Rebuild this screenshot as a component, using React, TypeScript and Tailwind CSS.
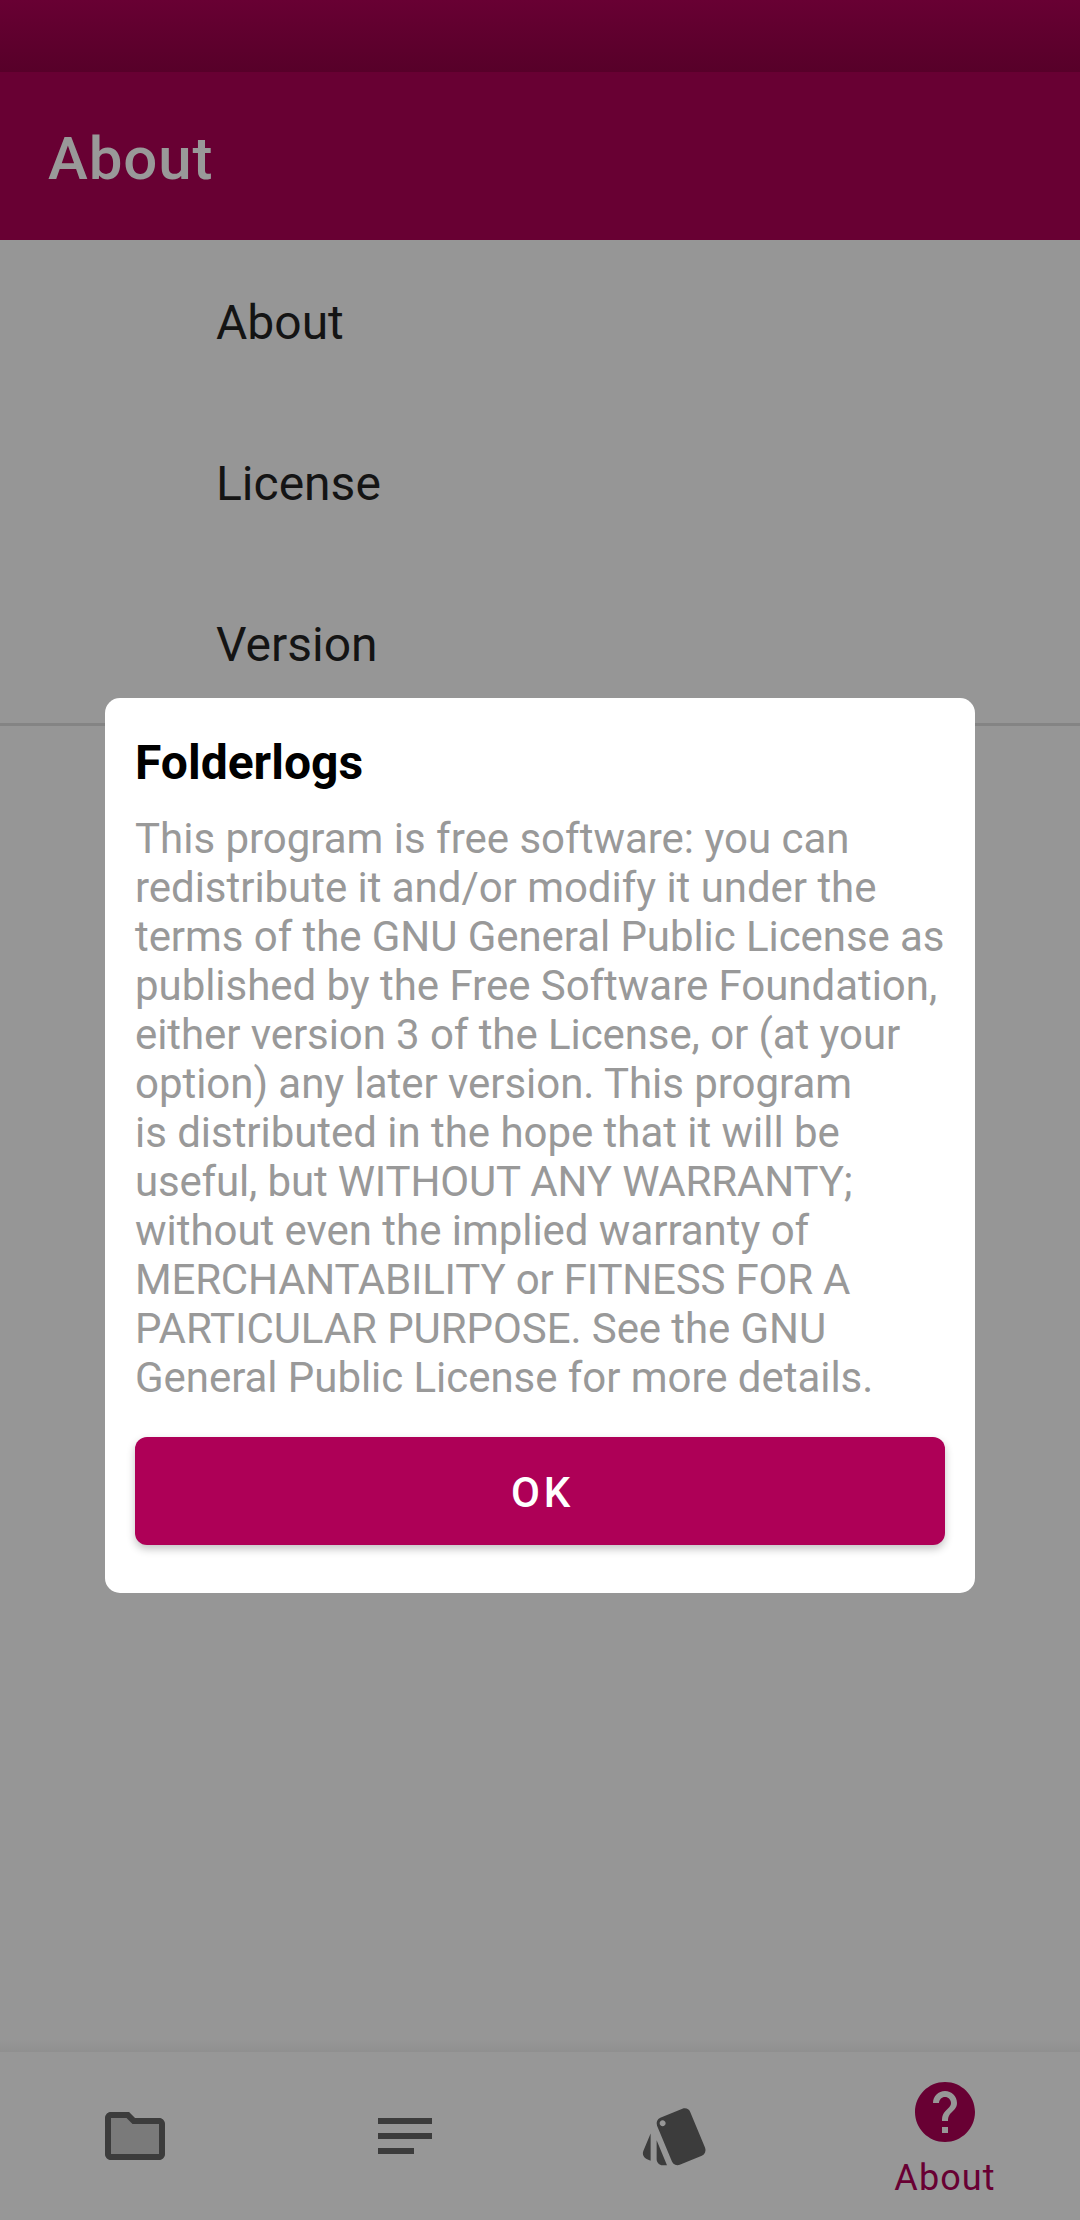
import React from "react";
import { MdFolder, MdHelp, MdNotes, MdOutlineFolder, MdStyle } from "react-icons/md";

const settings = ["About", "License", "Version"];

const licenseLines = [
  { text: "This program is free software: you can", tracking: "tracking-[-0.01px]" },
  { text: "redistribute it and/or modify it under the", tracking: "tracking-[-0.04px]" },
  { text: "terms of the GNU General Public License as", tracking: "tracking-[-0.07px]" },
  { text: "published by the Free Software Foundation,", tracking: "tracking-[-0.04px]" },
  { text: "either version 3 of the License, or (at your", tracking: "tracking-[-0.08px]" },
  { text: "option) any later version. This program", tracking: "tracking-[-0.04px]" },
  { text: "is distributed in the hope that it will be", tracking: "tracking-[-0.04px]" },
  { text: "useful, but WITHOUT ANY WARRANTY;", tracking: "tracking-[-0.16px]" },
  { text: "without even the implied warranty of", tracking: "tracking-[-0.04px]" },
  { text: "MERCHANTABILITY or FITNESS FOR A", tracking: "tracking-[-0.19px]" },
  { text: "PARTICULAR PURPOSE. See the GNU", tracking: "tracking-[-0.08px]" },
  { text: "General Public License for more details.", tracking: "tracking-[-0.05px]" },
];

function TopBar() {
  return (
    <header className="shrink-0">
      <div className="h-[72px] bg-linear-to-b from-[#680033] to-[#570029]" />
      <div className="flex h-[168px] items-center bg-[#680033] pl-12">
        <h1 className="pt-[5px] text-[60px] leading-[70px] font-medium tracking-[0.9px] text-[#999999]">About</h1>
      </div>
    </header>
  );
}

function SettingsList() {
  return (
    <ul className="shrink-0 border-b-[3px] border-[#848484]">
      {settings.map((label) => (
        <li key={label} className="flex h-[161px] items-center pt-1 pl-[216px] text-[48px] leading-14 text-[#141414]">
          {label}
        </li>
      ))}
    </ul>
  );
}

/** Two-tone folder: a translucent fill under the outline. */
function FolderIcon() {
  return (
    <span className="grid size-[72px]">
      <MdFolder className="col-start-1 row-start-1 size-[72px] text-[#7a7a7a]" />
      <MdOutlineFolder className="col-start-1 row-start-1 size-[72px]" />
    </span>
  );
}

function BottomNav() {
  return (
    <nav className="grid h-[168px] shrink-0 grid-cols-4 bg-[#979797] text-[#3c3c3c]">
      <div className="flex items-center justify-center">
        <FolderIcon />
      </div>
      <div className="flex items-center justify-center">
        <MdNotes className="size-[72px]" />
      </div>
      <div className="flex items-center justify-center">
        <MdStyle className="size-[72px]" />
      </div>
      <div className="flex flex-col items-center pt-6 text-[#680033]">
        <MdHelp className="size-[72px]" />
        <span className="mt-[9px] text-[36px] leading-[42px] tracking-[1.1px]">About</span>
      </div>
    </nav>
  );
}

function LicenseDialog() {
  return (
    <div className="absolute inset-x-[105px] top-[698px] flex h-[895px] flex-col rounded-[15px] bg-white px-[30px]">
      <h2 className="mt-[37px] text-[48px] leading-14 font-bold text-black">Folderlogs</h2>
      <p className="mt-[23px] text-[42px] leading-[49px] whitespace-nowrap text-[#999999]">
        {licenseLines.map(({ text, tracking }) => (
          <span key={text} className={`block ${tracking}`}>
            {text}
          </span>
        ))}
      </p>
      <button className="mt-[35px] h-[108px] shrink-0 rounded-xl bg-[#ae0057] pt-0.5 pl-[5px] text-[42px] font-medium tracking-[3.75px] text-white shadow-[0_4px_8px_rgba(0,0,0,0.24)]">
        OK
      </button>
    </div>
  );
}

export default function App() {
  return (
    <div className="relative flex h-[2220px] w-[1080px] flex-col overflow-hidden bg-[#969696] font-[Roboto,sans-serif]">
      <TopBar />
      <SettingsList />
      <main className="grow" />
      <div className="h-3 shrink-0 bg-linear-to-b from-[#969696] to-[#909090]" />
      <BottomNav />
      <LicenseDialog />
    </div>
  );
}
